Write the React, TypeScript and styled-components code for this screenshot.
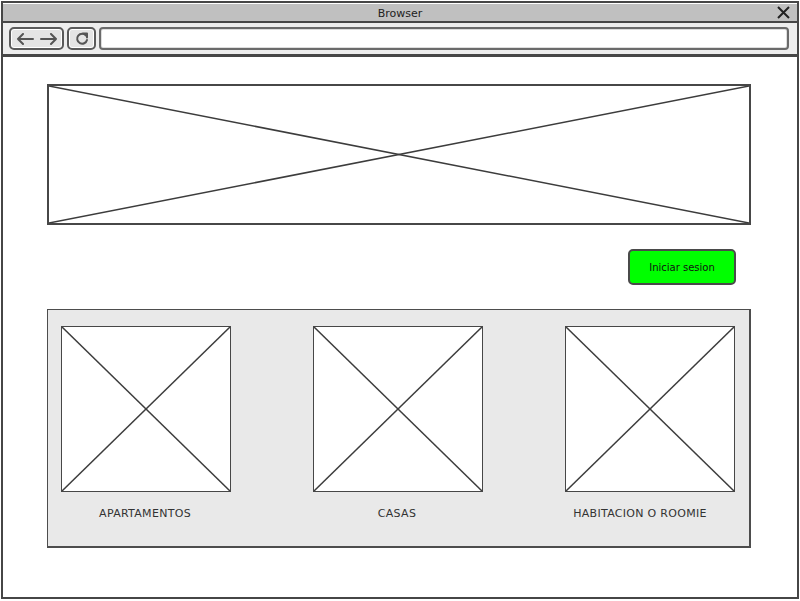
import React from 'react';
import styled, { createGlobalStyle } from 'styled-components';

const GlobalStyle = createGlobalStyle`
  html, body {
    margin: 0;
    padding: 0;
    background: #ffffff;
    font-family: "DejaVu Sans", "Liberation Sans", sans-serif;
  }
`;

// Browser-Fenster
const Window = styled.div`
  box-sizing: border-box;
  width: 798px;
  height: 598px;
  margin: 1px 0 0 1px;
  border: 2px solid #464646;
  display: flex;
  flex-direction: column;
  background: #fff;
`;

const TitleBar = styled.div`
  height: 16px;
  margin-top: 1px;
  padding-top: 1px;
  background: #c0c0c0;
  border-bottom: 2px solid #464646;
  position: relative;
  display: flex;
  align-items: center;
  justify-content: center;
  font-size: 11px;
  color: #222;
`;

const CloseIcon = styled.svg`
  position: absolute;
  right: 6px;
  top: 1px;
`;

const Toolbar = styled.div`
  height: 31px;
  background: #ededed;
  border-bottom: 3px solid #464646;
  display: flex;
  align-items: center;
  gap: 3px;
  padding: 0 6px;
`;

const ToolButton = styled.div<{ $w: number }>`
  box-sizing: border-box;
  width: ${p => p.$w}px;
  height: 23px;
  border: 2px solid #5a5a5a;
  border-radius: 5px;
  background: #e4e4e4;
  box-shadow: inset 0 0 0 1px #fff;
  display: flex;
  align-items: center;
  justify-content: center;
  gap: 6px;
`;

const AddressField = styled.div`
  flex: 1;
  box-sizing: border-box;
  height: 23px;
  border: 2px solid #6a6a6a;
  border-radius: 4px;
  background: #fff;
  box-shadow: inset 0 0 0 1px #ddd;
  margin-right: 2px;
`;

const Content = styled.div`
  flex: 1;
  display: flex;
  flex-direction: column;
  padding: 27px 0 0 44px;
`;

const Placeholder = styled.div<{ $w: number; $h: number; $bw: number }>`
  box-sizing: border-box;
  width: ${p => p.$w}px;
  height: ${p => p.$h}px;
  border: ${p => p.$bw}px solid #474747;
  background: #fff;
  svg {
    display: block;
    width: 100%;
    height: 100%;
  }
`;

const ButtonRow = styled.div`
  width: 704px;
  display: flex;
  justify-content: flex-end;
  padding-right: 15px;
  box-sizing: border-box;
  margin-top: 24px;
`;

const LoginButton = styled.button`
  box-sizing: border-box;
  width: 108px;
  height: 36px;
  border: 2px solid #4a4a4a;
  border-radius: 5px;
  background: #00ff00;
  color: #111;
  font-family: "DejaVu Sans", "Liberation Sans", sans-serif;
  font-size: 10px;
  padding: 0;
`;

const Panel = styled.div`
  box-sizing: border-box;
  width: 704px;
  height: 239px;
  margin-top: 24px;
  border: 2px solid #4d4d4d;
  border-top-width: 1px;
  border-left-width: 1px;
  background: #e9e9e9;
  display: flex;
  gap: 82px;
  padding: 16px 0 0 13px;
`;

const Card = styled.div`
  display: flex;
  flex-direction: column;
  align-items: center;
`;

const CardLabel = styled.div<{ $nudge: number }>`
  margin-top: 15px;
  margin-right: ${p => p.$nudge}px;
  font-size: 11px;
  color: #333;
  letter-spacing: 0.3px;
`;

const Cross = () => (
  <svg viewBox="0 0 100 100" preserveAspectRatio="none">
    <line x1="0" y1="0" x2="100" y2="100" stroke="#3c3c3c" strokeWidth="1.5" vectorEffect="non-scaling-stroke" />
    <line x1="100" y1="0" x2="0" y2="100" stroke="#3c3c3c" strokeWidth="1.5" vectorEffect="non-scaling-stroke" />
  </svg>
);

const Arrow = ({ dir }: { dir: 'left' | 'right' }) => (
  <svg width="18" height="12" viewBox="0 0 18 12">
    {dir === 'left' ? (
      <path d="M17 6H2M7 1L2 6l5 5" fill="none" stroke="#555" strokeWidth="2" strokeLinecap="round" strokeLinejoin="round" />
    ) : (
      <path d="M1 6h15M11 1l5 5-5 5" fill="none" stroke="#555" strokeWidth="2" strokeLinecap="round" strokeLinejoin="round" />
    )}
  </svg>
);

const categories = [
  { label: 'APARTAMENTOS', nudge: 2 },
  { label: 'CASAS', nudge: 2 },
  { label: 'HABITACION O ROOMIE', nudge: 20 },
];

export default function App() {
  return (
    <>
      <GlobalStyle />
      <Window>
        <TitleBar>
          Browser
          <CloseIcon width="15" height="15" viewBox="0 0 15 15">
            <path d="M2 2l11 11M13 2L2 13" stroke="#222" strokeWidth="2" />
          </CloseIcon>
        </TitleBar>
        <Toolbar>
          <ToolButton $w={55}>
            <Arrow dir="left" />
            <Arrow dir="right" />
          </ToolButton>
          <ToolButton $w={29}>
            <svg width="14" height="14" viewBox="0 0 14 14">
              <path d="M11 3.5A5 5 0 1 0 12 8" fill="none" stroke="#555" strokeWidth="2" strokeLinecap="round" />
              <path d="M8 1.5h4v4" fill="none" stroke="#555" strokeWidth="2" strokeLinecap="round" strokeLinejoin="round" />
            </svg>
          </ToolButton>
          <AddressField />
        </Toolbar>
        <Content>
          <Placeholder $w={704} $h={141} $bw={2}>
            <Cross />
          </Placeholder>
          <ButtonRow>
            <LoginButton>Iniciar sesion</LoginButton>
          </ButtonRow>
          <Panel>
            {categories.map(c => (
              <Card key={c.label}>
                <Placeholder $w={170} $h={166} $bw={1.5}>
                  <Cross />
                </Placeholder>
                <CardLabel $nudge={c.nudge}>{c.label}</CardLabel>
              </Card>
            ))}
          </Panel>
        </Content>
      </Window>
    </>
  );
}
